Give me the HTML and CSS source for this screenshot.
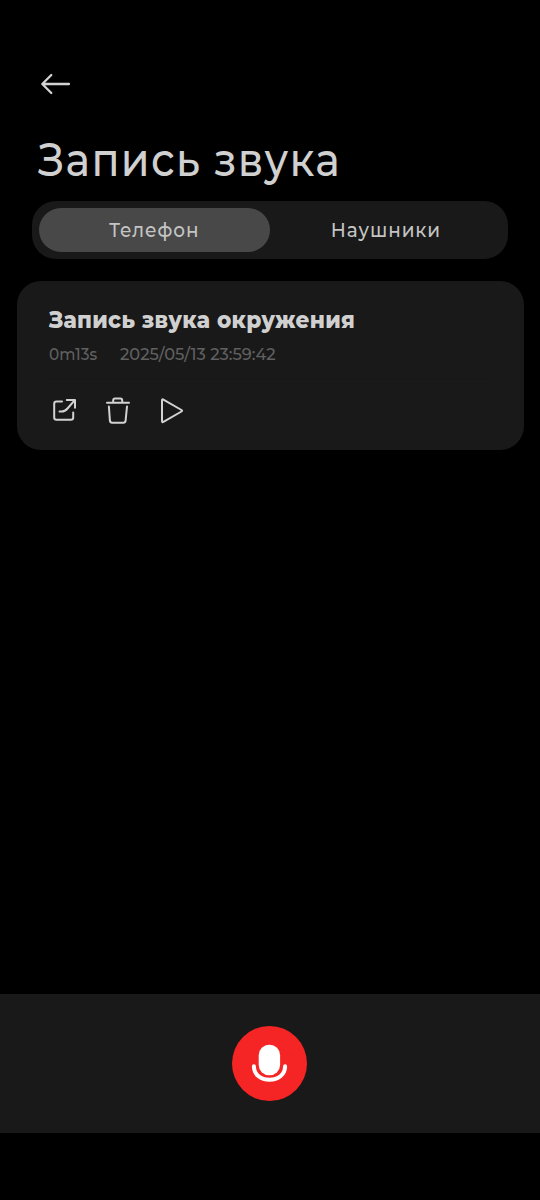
FILE: index.html
```html
<!DOCTYPE html>
<html lang="ru">
<head>
<meta charset="utf-8">
<title>Запись звука</title>
<link rel="stylesheet" href="styles.css">
</head>
<body>
<div class="screen">
  <header class="header">
    <button class="icon-button back" aria-label="Назад">
      <svg width="32" height="24" viewBox="0 0 32 24"><path d="M29 12H2.5M11.3 3L2.3 12L11.3 21"/></svg>
    </button>
    <h1 class="title">Запись звука</h1>
  </header>
  <nav class="tabs">
    <button class="tab tab-active"><span class="tab-label">Телефон</span></button>
    <button class="tab"><span class="tab-label">Наушники</span></button>
  </nav>
  <main class="list">
    <article class="card">
      <h2 class="card-title">Запись звука окружения</h2>
      <div class="meta"><span class="duration">0m13s</span><span class="date">2025/05/13 23:59:42</span></div>
      <div class="actions">
        <button class="icon-button" aria-label="Поделиться">
          <svg width="30" height="30" viewBox="0 0 30 30"><path d="M13 4.5H7.5Q5.2 4.5 5.2 6.8V20.4Q5.2 22.7 7.5 22.7H21.9Q24.2 22.7 24.2 20.4V15.5M17.8 3H26V10.7M25.8 3.2L18.5 11.5Q16 14.5 12.5 14.5H10.5"/></svg>
        </button>
        <button class="icon-button" aria-label="Удалить">
          <svg width="30" height="30" viewBox="0 0 30 30"><path d="M4 5.8H26M10.2 5.5V3.4Q10.2 1.5 12 1.5H17.4Q19.2 1.5 19.2 3.4V5.5M5.9 9.5L6.9 23.7Q7.1 25.7 9.1 25.7H20.4Q22.4 25.7 22.6 23.7L24 9.5"/></svg>
        </button>
        <button class="icon-button" aria-label="Воспроизвести">
          <svg width="30" height="30" viewBox="0 0 30 30"><path d="M5 3.4Q5 1.8 6.4 2.6L24.5 13Q25.7 13.8 24.5 14.5L6.4 24.9Q5 25.7 5 24.1Z"/></svg>
        </button>
      </div>
    </article>
  </main>
  <footer class="recorder">
    <button class="record" aria-label="Начать запись">
      <svg width="75" height="75" viewBox="0 0 75 75"><rect class="mic" x="26.7" y="18.7" width="21.4" height="30.6" rx="10.5"/><path class="mic-stand" d="M21.9 40.3C22 49 29 53.8 37.5 53.8S53 49 53.1 40.3"/></svg>
    </button>
  </footer>
</div>
</body>
</html>
```
FILE: styles.css
```css
* {
  box-sizing: border-box;
}

body {
  margin: 0;
  background: #000;
  color: #d0d0d0;
  font-family: Montserrat, Inter, "Noto Sans", sans-serif;
}

button {
  margin: 0;
  padding: 0;
  border: 0;
  background: none;
  color: inherit;
  font: inherit;
}

svg {
  display: block;
  fill: none;
  stroke: #d2d2d2;
  stroke-width: 2;
  stroke-linecap: round;
  stroke-linejoin: round;
}

.screen {
  display: flex;
  flex-direction: column;
  height: 1200px;
  padding-bottom: 67px;
}

.header {
  height: 201px;
  padding: 72px 36px 0;
}

.icon-button {
  display: block;
}

.back {
  margin-left: 4px;
}

.back svg {
  stroke-width: 2.3;
}

/* Text is set slightly condensed, with open tracking. */
.title {
  margin: 36px 0 0 1.5px;
  font-size: 46px;
  font-weight: 500;
  line-height: 56px;
  letter-spacing: 1.5px;
  white-space: nowrap;
  transform: scaleX(0.902);
  transform-origin: left;
}

.tabs {
  display: flex;
  height: 57.5px;
  margin: 0 32px;
  padding: 7px;
  border-radius: 24px;
  background: #191919;
}

.tab {
  flex: 1;
  height: 43.5px;
  padding-top: 1px;
  border-radius: 22px;
  color: #c4c4c4;
  font-size: 20px;
  font-weight: 500;
  line-height: 42px;
  letter-spacing: 1px;
}

.tab-label {
  display: inline-block;
  transform: scaleX(0.92);
}

.tab-active {
  background: #484848;
}

.list {
  flex: 1;
  padding: 22.5px 16.5px 0;
}

.card {
  height: 169px;
  padding: 24px 32px 0;
  border-radius: 24px;
  background: #191919;
}

.card-title {
  margin: 0;
  font-size: 23px;
  font-weight: 800;
  line-height: 31px;
  letter-spacing: 0.3px;
  white-space: nowrap;
  transform: scaleX(0.94);
  transform-origin: left;
}

.meta {
  display: flex;
  height: 43px;
  padding-top: 6px;
  border-bottom: 1px solid #171717;
  color: #606060;
  font-size: 17px;
  font-weight: 500;
  line-height: 24px;
  white-space: nowrap;
}

.duration {
  width: 71px;
  transform: scaleX(0.9);
  transform-origin: left;
}

.date {
  transform: scaleX(0.955);
  transform-origin: left;
}

.actions {
  display: flex;
  gap: 24px;
  padding-top: 18px;
}

.recorder {
  display: flex;
  align-items: center;
  justify-content: center;
  height: 139px;
  padding-right: 1px;
  background: #191919;
}

.record {
  width: 75px;
  height: 75px;
  border-radius: 50%;
  background: #f52525;
}

.mic {
  fill: #fff;
  stroke: none;
}

.mic-stand {
  stroke: #fff;
  stroke-width: 4;
}
```
